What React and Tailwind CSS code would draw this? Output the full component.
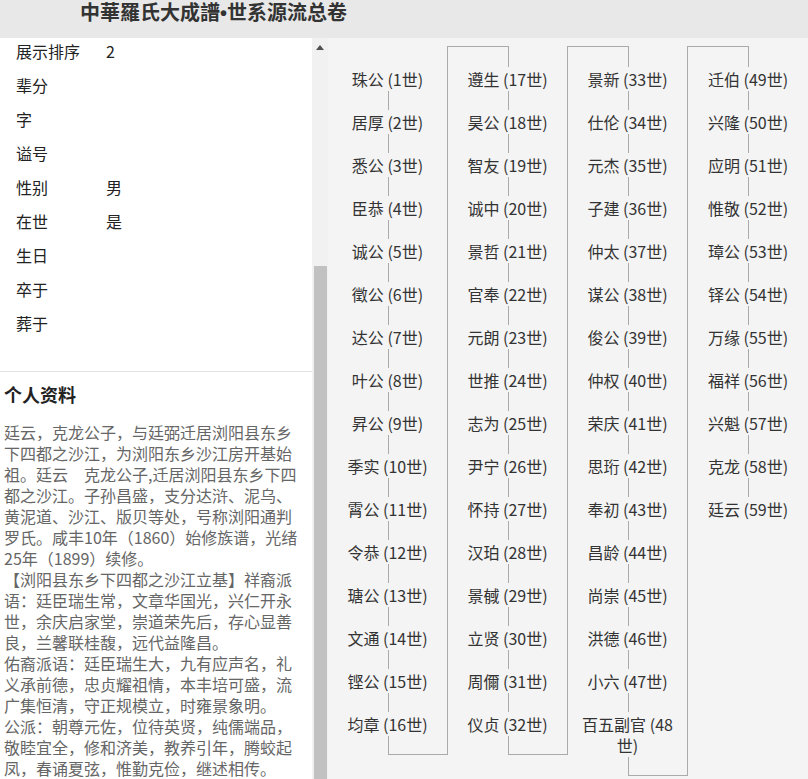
import { Fragment } from 'react'

const columns = [
  ['珠公', '居厚', '悉公', '臣恭', '诚公', '徵公', '达公', '叶公', '昇公', '季实', '霄公', '令恭', '瑭公', '文通', '铿公', '均章'],
  ['遵生', '昊公', '智友', '诚中', '景哲', '官奉', '元朗', '世推', '志为', '尹宁', '怀持', '汉珀', '景戫', '立贤', '周儞', '仪贞'],
  ['景新', '仕伦', '元杰', '子建', '仲太', '谋公', '俊公', '仲权', '荣庆', '思珩', '奉初', '昌龄', '尚崇', '洪德', '小六', '百五副官'],
  ['迁伯', '兴隆', '应明', '惟敬', '璋公', '铎公', '万缘', '福祥', '兴魁', '克龙', '廷云'],
]

const fields = [
  ['展示排序', '2'],
  ['辈分', ''],
  ['字', ''],
  ['谥号', ''],
  ['性别', '男'],
  ['在世', '是'],
  ['生日', ''],
  ['卒于', ''],
  ['葬于', ''],
]

const bio = [
  '廷云，克龙公子，与廷弼迁居浏阳县东乡下四都之沙江，为浏阳东乡沙江房开基始祖。廷云　克龙公子,迁居浏阳县东乡下四都之沙江。子孙昌盛，支分达浒、泥乌、黄泥道、沙江、版贝等处，号称浏阳通判罗氏。咸丰10年（1860）始修族谱，光绪25年（1899）续修。',
  '【浏阳县东乡下四都之沙江立基】祥裔派语：廷臣瑞生常，文章华国光，兴仁开永世，余庆启家堂，崇道荣先后，存心显善良，兰馨联桂馥，远代益隆昌。',
  '佑裔派语：廷臣瑞生大，九有应声名，礼义承前德，忠贞耀祖情，本丰培可盛，流广集恒清，守正规模立，时雍景象明。',
  '公派：朝尊元佐，位待英贤，纯儒端品，敬睦宜全，修和济美，教养引年，腾蛟起凤，春诵夏弦，惟勤克俭，继述相传。',
]

function Column({ names, start, index, last }) {
  return (
    <div className={'w-[120px] flex flex-col ' + (last ? '' : 'border-r border-[#aaaaaa]')}>
      {index === 0 ? (
        <div className="h-[21px]" />
      ) : (
        <div className="h-[21px] w-[61px] border-t border-r border-[#aaaaaa]" />
      )}
      {names.map((name, i) => (
        <Fragment key={name + i}>
          {i > 0 && <div className="h-[19px] ml-[60px] border-l border-[#aaaaaa]" />}
          <div className="mx-auto w-[100px] py-[1.5px] text-center text-[16px] leading-[21px] text-[#333]">
            {name} ({start + i}世)
          </div>
        </Fragment>
      ))}
      {!last && <div className="h-[19px] ml-[60px] border-l border-b border-[#aaaaaa]" />}
    </div>
  )
}

export default function App() {
  let start = 1
  const cols = columns.map((names, index) => {
    const el = (
      <Column key={index} names={names} start={start} index={index} last={index === columns.length - 1} />
    )
    start += names.length
    return el
  })

  return (
    <div className="h-[779px] w-full overflow-hidden bg-[#f4f4f4] font-['Noto_Sans_CJK_SC',sans-serif]">
      <header className="h-[38px] bg-[#e8e8e8] pl-[80px]">
        <h1 className="font-['Liberation_Sans','Noto_Sans_CJK_SC',sans-serif] text-[20px] font-bold leading-[26px] text-[#333]">
          中華羅氏大成譜•世系源流总卷
        </h1>
      </header>

      <div className="flex h-[741px]">
        <aside className="w-[312px] h-full overflow-hidden bg-white">
          <ul className="-mt-[4px] pb-[31px]">
            {fields.map(([label, value]) => (
              <li key={label} className="flex h-[34px] items-center text-[16px] text-[#222]">
                <span className="w-[106px] pl-[16px] shrink-0">{label}</span>
                <span>{value}</span>
              </li>
            ))}
          </ul>
          <section className="border-t border-[#e3e3e3]">
            <h2 className="pl-[4px] pt-[10px] text-[18px] font-bold leading-[24px] text-[#222]">个人资料</h2>
            <div className="mt-[16px] w-[300px] pl-[4px] box-content text-[16px] leading-[21px] text-[#666]">
              {bio.map((p, i) => (
                <p key={i}>{p}</p>
              ))}
            </div>
          </section>
        </aside>

        <div className="w-[16px] h-full bg-[#f1f1f1] flex flex-col">
          <div className="h-[17px] flex items-center justify-center pt-[1px]">
            <svg width="8" height="5" viewBox="0 0 8 5">
              <polygon points="4,0 8,5 0,5" fill="#505050" />
            </svg>
          </div>
          <div className="h-[211px]" />
          <div className="flex-1 ml-[2px] mr-[1px] bg-[#c1c1c1]" />
        </div>

        <main className="flex-1 pt-[8px]">
          <div className="flex items-start">{cols}</div>
        </main>
      </div>
    </div>
  )
}
